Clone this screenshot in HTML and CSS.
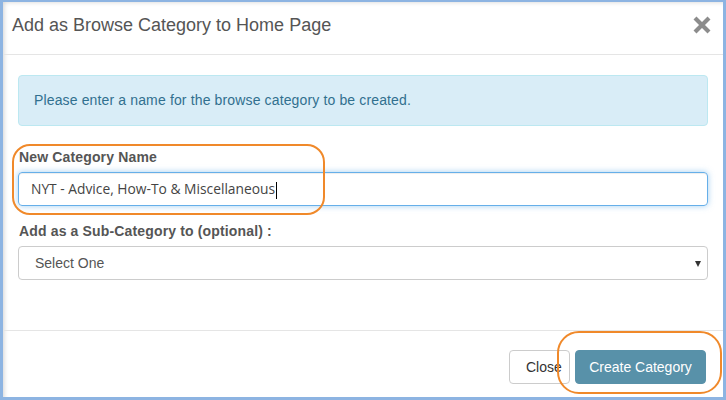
FILE: index.html
```html
<!DOCTYPE html>
<html>
<head>
<meta charset="utf-8">
<link rel="stylesheet" href="styles.css">
</head>
<body>
<div class="frame">
  <div class="modal">
    <div class="modal-header">
      <h4 class="modal-title">Add as Browse Category to Home Page</h4>
      <svg class="close" width="20" height="20" viewBox="0 0 20 20"><path d="M3 3 L17 17 M17 3 L3 17" stroke="#8c8c8c" stroke-width="4.2" stroke-linecap="butt"/></svg>
    </div>
    <div class="modal-body">
      <div class="alert">Please enter a name for the browse category to be created.</div>
      <div class="form-group">
        <label class="label">New Category Name</label>
        <div class="input focus">NYT - Advice, How-To &amp; Miscellaneous<span class="caret"></span></div>
      </div>
      <div class="form-group">
        <label class="label">Add as a Sub-Category to (optional) :</label>
        <div class="select">Select One<span class="arrow"></span></div>
      </div>
    </div>
    <div class="modal-footer">
      <button class="btn btn-default">Close</button>
      <button class="btn btn-primary">Create Category</button>
    </div>
    <div class="ring ring-name"></div>
    <div class="ring ring-create"></div>
  </div>
</div>
</body>
</html>
```
FILE: styles.css
```css
html, body {
  margin: 0;
  padding: 0;
  background: #8db4e2;
}
body {
  width: 726px;
  height: 400px;
  overflow: hidden;
  font-family: "Liberation Sans", Arial, sans-serif;
  font-size: 14px;
  color: #333;
}
.frame {
  padding: 2px 3px 3px 3px;
}
.modal {
  position: relative;
  background: #fff;
  height: 395px;
  box-shadow: inset 4px 3px 5px -3px rgba(0,0,0,0.18);
}
.modal-header {
  display: flex;
  justify-content: space-between;
  align-items: center;
  height: 52px;
  padding: 0 11px 0 9px;
  border-bottom: 1px solid #e5e5e5;
  box-sizing: content-box;
}
.modal-title {
  margin: 0;
  font-size: 18px;
  font-weight: normal;
  line-height: 26px;
  color: #555;
  padding-bottom: 6px;
}
.close {
  margin-bottom: 6px;
}
.modal-body {
  padding: 20px 15px 35px 15px;
}
.alert {
  background: #d9edf7;
  border: 1px solid #bce8f1;
  border-radius: 4px;
  color: #31708f;
  padding: 15px 15px;
  line-height: 19px;
  letter-spacing: 0.14px;
  margin-bottom: 21px;
}
.form-group {
  margin-bottom: 15px;
}
.label {
  display: block;
  font-weight: bold;
  font-size: 14px;
  letter-spacing: 0.15px;
  color: #555;
  line-height: 20px;
  margin-bottom: 5px;
  padding-left: 1px;
}
.input, .select {
  position: relative;
  height: 34px;
  box-sizing: border-box;
  border: 1px solid #ccc;
  border-radius: 4px;
  line-height: 32px;
  font-size: 14px;
  color: #555;
}
.input {
  padding-left: 12px;
  font-family: "Open Sans", "Liberation Sans", sans-serif;
  font-size: 13.8px;
  color: #444;
}
.focus {
  border-color: #66afe9;
  box-shadow: inset 0 1px 1px rgba(0,0,0,.075), 0 0 6px rgba(102,175,233,.6);
}
.caret {
  display: inline-block;
  width: 1px;
  height: 17px;
  background: #000;
  vertical-align: middle;
  margin-left: 1px;
}
.select {
  padding-left: 16px;
}
.arrow {
  position: absolute;
  right: 6px;
  top: 14px;
  width: 0;
  height: 0;
  border-left: 3.5px solid transparent;
  border-right: 3.5px solid transparent;
  border-top: 6px solid #333;
}
.modal-footer {
  display: flex;
  justify-content: flex-end;
  gap: 5px;
  border-top: 1px solid #e5e5e5;
  padding: 19px 17px 0 0;
}
.btn {
  font-family: "Liberation Sans", Arial, sans-serif;
  font-size: 14px;
  height: 34px;
  line-height: 20px;
  padding: 6px 12px;
  border-radius: 4px;
  border: 1px solid #ccc;
  box-sizing: border-box;
}
.btn-default {
  background: #fff;
  color: #333;
  width: 61px;
  padding-left: 16px;
}
.btn-primary {
  background: #5891a9;
  border-color: #5891a9;
  color: #fff;
  width: 131px;
}
.ring {
  position: absolute;
  border: 2px solid #f0892a;
  box-sizing: border-box;
}
.ring-name {
  left: 9px;
  top: 142px;
  width: 313px;
  height: 71px;
  border-radius: 18px;
}
.ring-create {
  left: 554px;
  top: 329px;
  width: 165px;
  height: 63px;
  border-radius: 22px;
}
```
